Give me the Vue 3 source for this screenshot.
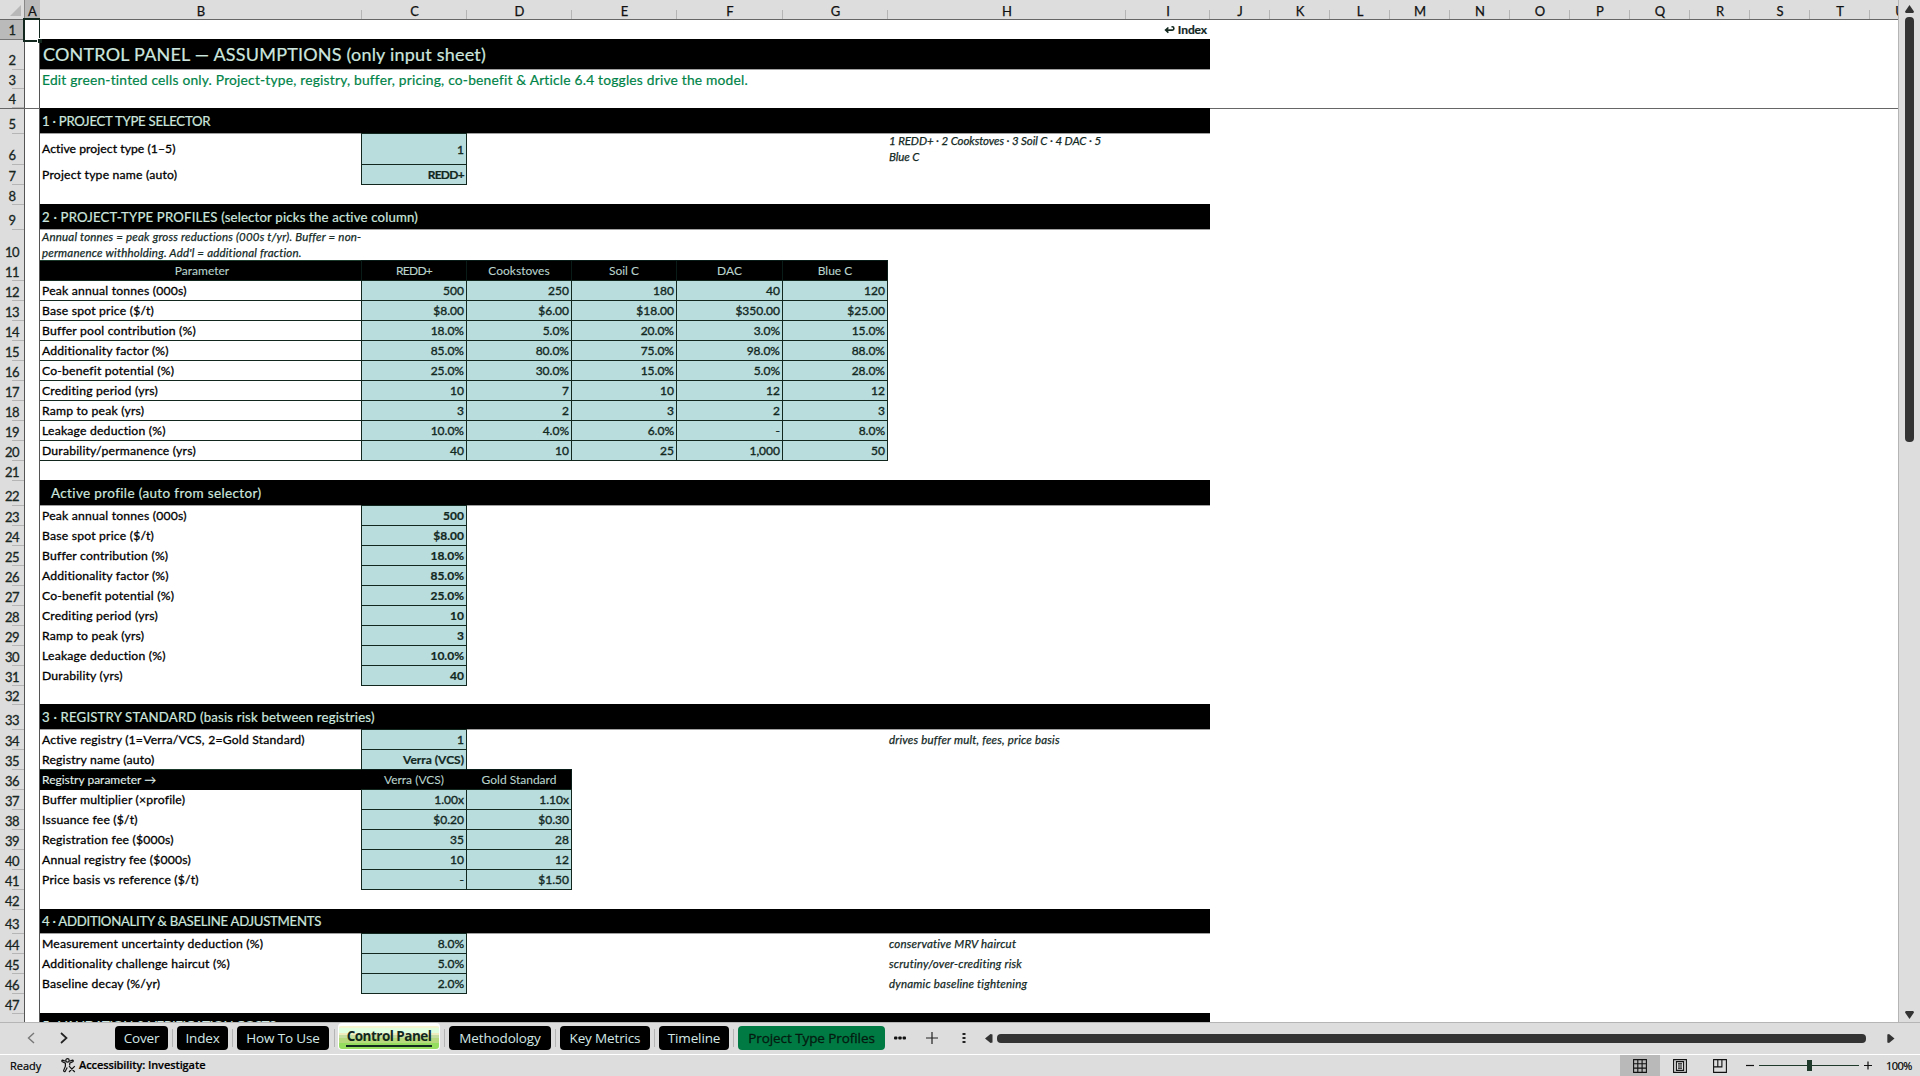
<template>
  <div class="app">
    <div class="workbook">
      <div class="sheet">
        <div class="col-heads">
          <div class="corner">
            <svg width="25" height="19" viewBox="0 0 25 19"><path d="M21 5v11H10z" fill="#b8b8b8" /></svg>
          </div>
          <div
            v-for="(name, i) in columns"
            :key="name"
            class="col-head"
            :class="{ active: i === 0 }"
          >{{ name }}</div>
        </div>

        <div
          v-for="row in rows"
          :key="row.n"
          class="row"
          :class="{ frozen: row.n === 4, tall: row.h > 23, tight: row.tight }"
          :style="{ height: row.h + 'px' }"
        >
          <div class="row-head" :class="{ active: row.n === 1 }">{{ row.n < 48 ? row.n : '' }}</div>
          <div class="col-a">
            <div v-if="row.n === 1" class="cursor"></div>
          </div>

          <div v-if="row.band" class="band" :class="row.kind"><span>{{ row.band }}</span></div>
          <div v-else-if="row.subtitle" class="subtitle"><span>{{ row.subtitle }}</span></div>
          <template v-else>
            <div class="label" :class="{ boxed: row.boxed, head: row.head, left: row.n === 36, note: row.n === 10 }">
              <span>{{ row.label }}</span>
            </div>
            <div
              v-for="(v, i) in row.values || []"
              :key="i"
              class="value"
              :class="{ head: row.head, bold: row.bold, plain: row.n === 36, narrow: v === 'REDD+' }"
            ><span>{{ v }}</span></div>
            <div v-if="row.note" class="note side"><span>{{ row.note }}</span></div>
            <div v-if="row.n === 1" class="index-link">
              <svg width="11" height="8" viewBox="0 0 11 8" fill="none" stroke="#12281f" stroke-width="1.6">
                <path d="M7.5 .8h.8q1.6 0 1.6 1.6t-1.6 1.7H2M4.4 1.5L1.6 4.1l2.8 2.6" />
              </svg>
              <span>Index</span>
            </div>
          </template>
        </div>
      </div>

      <div class="vscroll">
        <svg width="9" height="8" viewBox="0 0 9 8"><path d="M4.5 0L9 6.5 8.3 8H.7L0 6.5z" fill="#333" /></svg>
        <div class="vthumb"></div>
        <svg width="9" height="8" viewBox="0 0 9 8"><path d="M4.5 8L9 1.5 8.3 0H.7L0 1.5z" fill="#333" /></svg>
      </div>
    </div>

    <div class="tabbar">
      <div class="nav">
        <svg width="8" height="12" viewBox="0 0 8 12" fill="none" stroke="#777" stroke-width="1.4"><path d="M7 1L1.5 6 7 11" /></svg>
        <svg width="8" height="12" viewBox="0 0 8 12" fill="none" stroke="#222" stroke-width="1.7"><path d="M1 1l5.5 5L1 11" /></svg>
      </div>
      <div class="tabs">
        <div v-for="tab in tabs" :key="tab.name" class="tab" :class="tab.kind" :style="{ width: tab.w + 'px' }">
          <span>{{ tab.name }}</span>
        </div>
      </div>
      <div class="tab-tools">
        <svg width="12" height="4" viewBox="0 0 12 4" fill="#111"><rect width="3.4" height="3" y=".5" rx="1" /><rect x="4.3" width="3.4" height="3" y=".5" rx="1" /><rect x="8.6" width="3.4" height="3" y=".5" rx="1" /></svg>
        <svg width="12" height="12" viewBox="0 0 12 12" stroke="#222" stroke-width="1.2"><path d="M6 0v12M0 6h12" /></svg>
        <svg width="4" height="12" viewBox="0 0 4 12" fill="#222"><rect x=".5" y="1" width="3" height="2" /><rect x=".5" y="5" width="3" height="2" /><rect x=".5" y="9" width="3" height="2" /></svg>
      </div>
      <div class="hscroll">
        <svg width="8" height="9" viewBox="0 0 8 9"><path d="M0 4.5L5.5 0 7.5.6v7.8L5.5 9z" fill="#333" /></svg>
        <div class="hthumb"></div>
        <svg width="8" height="9" viewBox="0 0 8 9"><path d="M7.5 4.5L2 0 .3.6v7.8L2 9z" fill="#333" /></svg>
      </div>
    </div>

    <div class="statusbar">
      <span class="ready">Ready</span>
      <svg class="access" width="15" height="15" viewBox="0 0 15 15" fill="none" stroke="#111" stroke-width="1.2">
        <circle cx="6.5" cy="2.4" r="1.7" />
        <path d="M4.6 3.2L1.7 2.1Q.4 2.4 1 3.6l3.4 1.6v3L2.6 12.5q.2 1.6 1.6.9l2-4M8.4 3.2l3-1.1q1.3.3.7 1.5L8.7 5.2v2.2M8 8.2l5.8 5.8M13.8 8.2L8 14" />
      </svg>
      <span class="access-text">Accessibility: Investigate</span>
      <div class="views">
        <div class="view on">
          <svg width="14" height="14" viewBox="0 0 14 14" fill="none" stroke="#111" stroke-width="1.1"><path d="M.6.6h12.8v12.8H.6zM.6 4.8h12.8M.6 9.1h12.8M4.8.6v12.8M9.1.6v12.8" /></svg>
        </div>
        <div class="view">
          <svg width="14" height="14" viewBox="0 0 14 14" fill="none" stroke="#111" stroke-width="1.1"><path d="M.6.6h12.8v12.8H.6zM3.4 2.6h7.2v8.8H3.4zM5 4.9h4M5 7h4M5 9.1h4" /></svg>
        </div>
        <div class="view">
          <svg width="14" height="14" viewBox="0 0 14 14" fill="none" stroke="#111" stroke-width="1.1"><path d="M.6.6h12.8v12.8H.6zM.6 7.9h8.3V.6M4.8.6v7.3" /></svg>
        </div>
      </div>
      <div class="zoom">
        <svg width="8" height="9" viewBox="0 0 8 9" stroke="#111" stroke-width="1.2"><path d="M0 4.5h8" /></svg>
        <div class="slider"><div class="knob"></div></div>
        <svg width="8" height="9" viewBox="0 0 8 9" stroke="#111" stroke-width="1.2"><path d="M0 4.5h8M4 .5v8" /></svg>
      </div>
      <span class="percent">100%</span>
    </div>
  </div>
</template>

<script setup>
const columns = 'ABCDEFGHIJKLMNOPQRSTU'.split('')

const rows = [
  { n: 1, h: 20 },
  { n: 2, h: 30, band: 'CONTROL PANEL — ASSUMPTIONS (only input sheet)', kind: 'title' },
  { n: 3, h: 19, subtitle: 'Edit green-tinted cells only. Project-type, registry, buffer, pricing, co-benefit & Article 6.4 toggles drive the model.' },
  { n: 4, h: 20 },
  { n: 5, h: 25, band: '1 · PROJECT TYPE SELECTOR', kind: 'caps' },
  { n: 6, h: 31, label: 'Active project type (1–5)', values: ['1'], note: '1 REDD+ · 2 Cookstoves · 3 Soil C · 4 DAC · 5 Blue C', tight: true },
  { n: 7, h: 20, label: 'Project type name (auto)', values: ['REDD+'], bold: true },
  { n: 8, h: 20 },
  { n: 9, h: 25, band: '2 · PROJECT-TYPE PROFILES (selector picks the active column)' },
  { n: 10, h: 31, label: "Annual tonnes = peak gross reductions (000s t/yr). Buffer = non-permanence withholding. Add'l = additional fraction." },
  { n: 11, h: 20, label: 'Parameter', values: ['REDD+', 'Cookstoves', 'Soil C', 'DAC', 'Blue C'], head: true },
  { n: 12, h: 20, label: 'Peak annual tonnes (000s)', values: ['500', '250', '180', '40', '120'], boxed: true },
  { n: 13, h: 20, label: 'Base spot price ($/t)', values: ['$8.00', '$6.00', '$18.00', '$350.00', '$25.00'], boxed: true },
  { n: 14, h: 20, label: 'Buffer pool contribution (%)', values: ['18.0%', '5.0%', '20.0%', '3.0%', '15.0%'], boxed: true },
  { n: 15, h: 20, label: 'Additionality factor (%)', values: ['85.0%', '80.0%', '75.0%', '98.0%', '88.0%'], boxed: true },
  { n: 16, h: 20, label: 'Co-benefit potential (%)', values: ['25.0%', '30.0%', '15.0%', '5.0%', '28.0%'], boxed: true },
  { n: 17, h: 20, label: 'Crediting period (yrs)', values: ['10', '7', '10', '12', '12'], boxed: true },
  { n: 18, h: 20, label: 'Ramp to peak (yrs)', values: ['3', '2', '3', '2', '3'], boxed: true },
  { n: 19, h: 20, label: 'Leakage deduction (%)', values: ['10.0%', '4.0%', '6.0%', '-', '8.0%'], boxed: true },
  { n: 20, h: 20, label: 'Durability/permanence (yrs)', values: ['40', '10', '25', '1,000', '50'], boxed: true },
  { n: 21, h: 20 },
  { n: 22, h: 25, band: 'Active profile (auto from selector)', kind: 'indent' },
  { n: 23, h: 20, label: 'Peak annual tonnes (000s)', values: ['500'], bold: true },
  { n: 24, h: 20, label: 'Base spot price ($/t)', values: ['$8.00'], bold: true },
  { n: 25, h: 20, label: 'Buffer contribution (%)', values: ['18.0%'], bold: true },
  { n: 26, h: 20, label: 'Additionality factor (%)', values: ['85.0%'], bold: true },
  { n: 27, h: 20, label: 'Co-benefit potential (%)', values: ['25.0%'], bold: true },
  { n: 28, h: 20, label: 'Crediting period (yrs)', values: ['10'], bold: true },
  { n: 29, h: 20, label: 'Ramp to peak (yrs)', values: ['3'], bold: true },
  { n: 30, h: 20, label: 'Leakage deduction (%)', values: ['10.0%'], bold: true },
  { n: 31, h: 20, label: 'Durability (yrs)', values: ['40'], bold: true },
  { n: 32, h: 19 },
  { n: 33, h: 25, band: '3 · REGISTRY STANDARD (basis risk between registries)' },
  { n: 34, h: 20, label: 'Active registry (1=Verra/VCS, 2=Gold Standard)', values: ['1'], note: 'drives buffer mult, fees, price basis' },
  { n: 35, h: 20, label: 'Registry name (auto)', values: ['Verra (VCS)'], bold: true },
  { n: 36, h: 20, label: 'Registry parameter →', values: ['Verra (VCS)', 'Gold Standard'], head: true },
  { n: 37, h: 20, label: 'Buffer multiplier (×profile)', values: ['1.00x', '1.10x'] },
  { n: 38, h: 20, label: 'Issuance fee ($/t)', values: ['$0.20', '$0.30'] },
  { n: 39, h: 20, label: 'Registration fee ($000s)', values: ['35', '28'] },
  { n: 40, h: 20, label: 'Annual registry fee ($000s)', values: ['10', '12'] },
  { n: 41, h: 20, label: 'Price basis vs reference ($/t)', values: ['-', '$1.50'] },
  { n: 42, h: 20 },
  { n: 43, h: 24, band: '4 · ADDITIONALITY & BASELINE ADJUSTMENTS', kind: 'caps' },
  { n: 44, h: 20, label: 'Measurement uncertainty deduction (%)', values: ['8.0%'], note: 'conservative MRV haircut' },
  { n: 45, h: 20, label: 'Additionality challenge haircut (%)', values: ['5.0%'], note: 'scrutiny/over-crediting risk' },
  { n: 46, h: 20, label: 'Baseline decay (%/yr)', values: ['2.0%'], note: 'dynamic baseline tightening' },
  { n: 47, h: 20 },
  { n: 48, h: 25, band: '5 · VALIDATION & VERIFICATION COSTS', kind: 'caps' },
]

const tabs = [
  { name: 'Cover', w: 53 },
  { name: 'Index', w: 51 },
  { name: 'How To Use', w: 92 },
  { name: 'Control Panel', w: 102, kind: 'current' },
  { name: 'Methodology', w: 102 },
  { name: 'Key Metrics', w: 90 },
  { name: 'Timeline', w: 70 },
  { name: 'Project Type Profiles', w: 147, kind: 'green' },
]
</script>

<style>
body {
  margin: 0;
  overflow: hidden;
}
</style>

<style scoped>
.app {
  width: 1920px;
  height: 1076px;
  display: flex;
  flex-direction: column;
  background: #ddd;
  color: #111;
  font-family: Lato, "Liberation Sans", sans-serif;
  font-size: 12px;
  white-space: nowrap;
  overflow: hidden;
}

.workbook {
  display: flex;
  height: 1022px;
  border-bottom: 1px solid #b5b5b5;
}

.sheet {
  width: 1898px;
  height: 1022px;
  overflow: hidden;
  background: #fff;
  border-right: 1px solid #b5b5b5;
}

.col-heads,
.row {
  display: grid;
  grid-template-columns: 25px 15px 322px 105px 105px 105px 106px 105px 238px 84px repeat(12, 60px);
}

.col-heads {
  height: 20px;
  box-sizing: border-box;
  border-bottom: 1px solid #666;
  background: #ddd;
}

.col-head {
  font-size: 13px;
  line-height: 22px;
  height: 19px;
  text-align: center;
  background: linear-gradient(#b5b5b5, #b5b5b5) right bottom / 1px 9px no-repeat;
  -webkit-text-stroke: 0.25px;
}

.col-head.active {
  background: #bababa;
  border-left: 1px solid #888;
  margin-left: -1px;
}

.row-head {
  display: flex;
  align-items: flex-end;
  justify-content: center;
  box-sizing: border-box;
  border-right: 1px solid #555;
  background: linear-gradient(#b5b5b5, #b5b5b5) right bottom / 12px 1px no-repeat #ddd;
  font-size: 13px;
  line-height: 17px;
  letter-spacing: -0.5px;
  color: #18261f;
  -webkit-text-stroke: 0.3px;
}

.tall .row-head {
  padding-bottom: 1px;
}

.row-head.active {
  background: #bababa;
  border-bottom: 1px solid #777;
}

.col-a {
  position: relative;
  border-right: 1px solid #555;
}

.frozen {
  box-sizing: border-box;
  border-bottom: 1px solid #666;
}

.cursor {
  position: absolute;
  left: -2px;
  top: -2px;
  width: 14px;
  height: 20px;
  border: 2px solid #12281f;
  border-right-width: 1px;
  z-index: 2;
}

.cursor::after {
  content: '';
  position: absolute;
  right: -3px;
  bottom: -3px;
  width: 4px;
  height: 4px;
  background: #12281f;
  border: 1px solid #fff;
  border-right: 0;
  border-bottom: 0;
}

.band {
  grid-column: 3 / 11;
  display: flex;
  align-items: center;
  margin-top: -1px;
  padding-left: 2px;
  background: #000;
  border-bottom: 1px solid #a0a0a0;
  color: #cde6df;
  font-size: 13.2px;
  letter-spacing: 0.18px;
  -webkit-text-stroke: 0.2px;
}

.band.title {
  padding-left: 3px;
  font-size: 18px;
  letter-spacing: 0.2px;
}

.band.caps {
  letter-spacing: -0.27px;
}

.band.indent {
  padding-left: 11px;
  font-size: 13.5px;
  letter-spacing: 0.36px;
}

.subtitle {
  grid-column: 3 / 11;
  padding-left: 2px;
  line-height: 19px;
  font-size: 13.8px;
  letter-spacing: 0.2px;
  color: #008348;
  -webkit-text-stroke: 0.2px;
}

.label {
  grid-column: 3;
  display: flex;
  align-items: center;
  margin-top: -1px;
  padding: 0 0 1px 2px;
  color: #000;
  font-size: 12.2px;
  letter-spacing: 0.2px;
  -webkit-text-stroke: 0.3px;
}

.tight .label {
  letter-spacing: 0.05px;
}

.label.boxed {
  padding-bottom: 0;
  border-bottom: 1px solid #12281f;
  border-top: 1px solid #12281f;
}

.label.head {
  justify-content: center;
  font-size: 12px;
  letter-spacing: 0;
  background: #000;
  border-top: 1px solid #1c3a2c;
  color: #b9d3cc;
  -webkit-text-stroke: 0.1px;
}

.label.head.left {
  justify-content: flex-start;
  color: #e2f2ee;
}

.value {
  display: flex;
  align-items: center;
  justify-content: flex-end;
  margin: -1px 0 0 -1px;
  padding-right: 2px;
  background: #b9dcdc;
  border: 1px solid #12281f;
  color: #12281f;
  -webkit-text-stroke: 0.35px;
}

.value.bold {
  font-weight: 700;
  -webkit-text-stroke: 0.2px;
}

.value.head {
  justify-content: center;
  padding: 0;
  background: #000;
  border-color: #0a1c18;
  color: #b9d3cc;
  -webkit-text-stroke: 0.1px;
}

.value.plain {
  border-left-color: #000;
}

.value.narrow {
  letter-spacing: -0.7px;
}

.note,
.label.note {
  font-size: 11.5px;
  font-style: italic;
  line-height: 16px;
  letter-spacing: 0.2px;
  color: #12281f;
  white-space: normal;
  -webkit-text-stroke: 0.25px;
}

.note.side {
  grid-column: 9;
  display: flex;
  align-items: center;
  padding: 0 18px 0 1px;
}

.tight .note {
  margin-top: -1px;
  letter-spacing: -0.1px;
}

.index-link {
  grid-column: 10;
  display: flex;
  align-items: center;
  justify-content: flex-end;
  gap: 3px;
  margin-top: -1px;
  padding-right: 3px;
  font-weight: 700;
  letter-spacing: -0.1px;
  color: #12281f;
  -webkit-text-stroke: 0.2px;
}

.vscroll {
  display: flex;
  flex-direction: column;
  align-items: center;
  width: 21px;
  padding: 5px 0 3px;
  box-sizing: border-box;
}

.vthumb {
  width: 9px;
  height: 425px;
  margin: 4px 0 auto;
  border-radius: 4px;
  background: #333;
}

.tabbar {
  display: flex;
  height: 31px;
  border-bottom: 1px solid #fff;
  font-family: "Open Sans", "Noto Sans", sans-serif;
}

.nav {
  display: flex;
  gap: 25px;
  width: 88px;
  padding: 9px 0 0 27px;
}

.tabs {
  display: flex;
  gap: 9px;
  padding-top: 3px;
}

.tab {
  position: relative;
  display: flex;
  align-items: center;
  justify-content: center;
  height: 24px;
  border-radius: 4px;
  background: #000;
  color: #d3e8e6;
  font-size: 13.5px;
  line-height: 18px;
  letter-spacing: -0.15px;
}

.tab + .tab::before {
  content: '';
  position: absolute;
  left: -5px;
  top: 3px;
  width: 1px;
  height: 18px;
  background: #b5b5b5;
}

.tab.current {
  box-sizing: border-box;
  height: 27px;
  margin-top: -3px;
  padding-bottom: 4px;
  border: 1px solid #fff;
  border-top-width: 3px;
  background: linear-gradient(#f6f3cf 0 2px, #dfffdf 2px 7px, #f1ecc0 7px 9px, #c5dda0 9px 12px, #b5d97c 12px 17px, #95dd5f 17px);
  color: #12281f;
  font-weight: 700;
  letter-spacing: -0.52px;
}

.tab.current::after {
  content: '';
  position: absolute;
  left: 7px;
  right: 7px;
  bottom: 2px;
  height: 2px;
  background: #12281f;
}

.tab.green {
  background: #007a43;
  color: #041a10;
  letter-spacing: -0.08px;
  -webkit-text-stroke: 0.3px;
}

.tab-tools {
  display: flex;
  align-items: center;
  height: 30px;
  gap: 20px;
  padding-left: 9px;
}

.tab-tools svg:last-child {
  margin-left: 4px;
}

.hscroll {
  display: flex;
  align-items: center;
  height: 30px;
  padding-left: 19px;
}

.hthumb {
  width: 869px;
  height: 9px;
  margin: 0 21px 0 4px;
  border-radius: 4px;
  background: #333;
}

.statusbar {
  display: flex;
  align-items: center;
  height: 21px;
  font-family: "Open Sans", "Noto Sans", sans-serif;
  font-size: 11px;
  line-height: 16px;
  color: #000;
  -webkit-text-stroke: 0.2px;
}

.ready {
  width: 51px;
  padding-left: 10px;
}

.access-text {
  margin: -1px 0 0 3px;
  font-weight: 600;
  letter-spacing: -0.1px;
}

.views {
  display: flex;
  margin-left: auto;
}

.view {
  display: flex;
  align-items: center;
  justify-content: center;
  width: 40px;
  height: 21px;
}

.view.on {
  background: #b9b9b9;
}

.zoom {
  display: flex;
  align-items: center;
  margin-left: 6px;
  gap: 5px;
}

.slider {
  display: flex;
  align-items: center;
  justify-content: center;
  width: 100px;
  height: 11px;
  background: linear-gradient(#1f3a2a, #1f3a2a) center / 100% 1px no-repeat;
}

.knob {
  width: 5px;
  height: 11px;
  background: #1f3a2a;
}

.percent {
  width: 34px;
  margin-left: 14px;
  letter-spacing: -0.5px;
}
</style>
